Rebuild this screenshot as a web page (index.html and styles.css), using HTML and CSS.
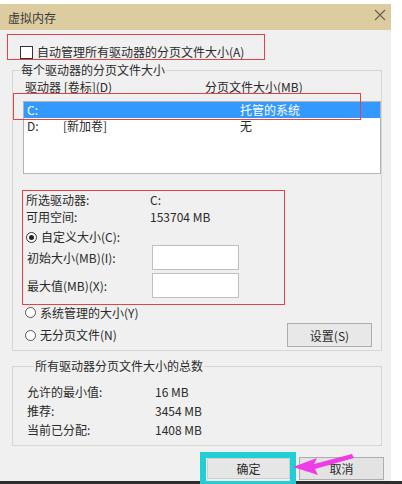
FILE: index.html
```html
<!DOCTYPE html>
<html>
  <head>
    <title>虚拟内存</title>
    <link rel="stylesheet" href="styles.css">
  </head>
  <body>
    <div class="window">
      <div class="titlebar">
        <span class="title">虚拟内存</span>
        <svg class="close" width="12" height="12" viewBox="0 0 12 12">
          <path d="M1 1 L11 11 M11 1 L1 11" stroke="#6b6456" stroke-width="1.2" fill="none"/>
        </svg>
      </div>
      <div class="content">
        <label class="auto-manage">
          <span class="checkbox"></span>自动管理所有驱动器的分页文件大小(A)
        </label>

        <fieldset class="group">
          <legend>每个驱动器的分页文件大小</legend>
          <div class="drives">
            <div class="list-head">
              <span class="head-drive">驱动器 [卷标](D)</span>
              <span>分页文件大小(MB)</span>
            </div>
            <div class="list">
              <div class="item selected">
                <span class="col-letter">C:</span>
                <span class="col-label"></span>
                <span>托管的系统</span>
              </div>
              <div class="item">
                <span class="col-letter">D:</span>
                <span class="col-label">[新加卷]</span>
                <span>无</span>
              </div>
            </div>
            <div class="mark-list"></div>
          </div>

          <div class="selected-drive">
            <div class="info-row"><span class="info-label">所选驱动器:</span><span>C:</span></div>
            <div class="info-row"><span class="info-label">可用空间:</span><span>153704 MB</span></div>
            <label class="radio-row custom"><span class="radio checked"></span>自定义大小(C):</label>
            <div class="size-row"><span class="size-label">初始大小(MB)(I):</span><span class="input"></span></div>
            <div class="size-row second"><span class="size-label">最大值(MB)(X):</span><span class="input"></span></div>
          </div>

          <label class="radio-row system"><span class="radio"></span>系统管理的大小(Y)</label>
          <div class="radio-row none">
            <label class="radio-label"><span class="radio"></span>无分页文件(N)</label>
            <button class="btn set-btn">设置(S)</button>
          </div>
        </fieldset>

        <fieldset class="group totals">
          <legend>所有驱动器分页文件大小的总数</legend>
          <div class="total-row"><span class="total-label">允许的最小值:</span><span>16 MB</span></div>
          <div class="total-row"><span class="total-label">推荐:</span><span>3454 MB</span></div>
          <div class="total-row"><span class="total-label">当前已分配:</span><span>1408 MB</span></div>
        </fieldset>

        <div class="buttons">
          <div class="ok-wrap">
            <button class="btn ok-btn">确定</button>
            <div class="mark-ok"></div>
          </div>
          <button class="btn cancel-btn">取消</button>
          <svg class="arrow" width="70" height="28" viewBox="0 0 70 28">
            <polygon points="3,15 27,6 24,12 62,2 64,6 25,17 28,23" fill="#ee3ce6"/>
          </svg>
        </div>
      </div>
    </div>
    <div class="taskbar"></div>
  </body>
</html>
```

FILE: styles.css
```css
body {
  margin: 0;
  width: 402px;
  height: 484px;
  overflow: hidden;
  background-color: #fff;
  font-family: "Noto Sans CJK SC", "Noto Sans", sans-serif;
  font-size: 12px;
  color: #2a2a2a;
}

.window {
  width: 391px;
  height: 477px;
  margin-top: 4px;
  background-color: #f0f0f0;
}

.titlebar {
  height: 26px;
  display: flex;
  align-items: center;
  justify-content: space-between;
  padding: 0 5px 0 8px;
  background-color: #dccca0;
  color: #3a3a3a;
}

.close {
  margin-top: -4px;
}

.content {
  padding: 0 9px 0 7px;
}

.auto-manage {
  display: flex;
  align-items: center;
  box-sizing: border-box;
  width: 258px;
  height: 26px;
  margin-top: 4px;
  padding: 10px 0 0 12px;
  border: 1px solid #e0434a;
  line-height: 14px;
}

.checkbox {
  width: 11px;
  height: 11px;
  margin-right: 4px;
  border: 1px solid #333;
  background-color: #fff;
}

.group {
  margin: 3px 0 0 5px;
  padding: 0;
  border: 1px solid #d6d6d6;
  min-width: 0;
}

.group legend {
  margin-left: 7px;
  padding: 0 1px;
  line-height: 14px;
}

.drives {
  position: relative;
  padding-top: 3px;
}

.list-head {
  display: flex;
  padding-left: 12px;
  line-height: 14px;
}

.head-drive {
  width: 180px;
}

.list {
  box-sizing: border-box;
  height: 73px;
  margin: 7px 0 0 10px;
  border: 1px solid #b4b4b4;
  background-color: #fff;
}

.item {
  display: flex;
  height: 16px;
  padding-left: 3px;
  line-height: 16px;
}

.item.selected {
  background-color: #3399ff;
  color: #fff;
}

.col-letter {
  width: 36px;
}

.col-label {
  width: 177px;
}

.mark-list {
  position: absolute;
  left: 0;
  top: 16px;
  width: 348px;
  height: 27px;
  box-sizing: border-box;
  border: 1px solid #e0434a;
}

.selected-drive {
  box-sizing: border-box;
  width: 263px;
  margin: 16px 0 0 9px;
  padding: 0 0 6px 3px;
  border: 1px solid #e0434a;
}

.info-row {
  display: flex;
  height: 17px;
  line-height: 17px;
}

.info-label {
  width: 124px;
}

.radio-row {
  display: flex;
  align-items: center;
  line-height: 16px;
}

.radio-row.custom {
  height: 16px;
  margin-top: 4px;
}

.radio-row.system {
  height: 15px;
  margin-left: 12px;
}

.radio-row.none {
  justify-content: space-between;
  height: 24px;
  margin: 3px 9px 3px 12px;
}

.radio-label {
  display: flex;
  align-items: center;
}

.radio {
  box-sizing: border-box;
  width: 11px;
  height: 11px;
  margin-right: 4px;
  border: 1px solid #555;
  border-radius: 50%;
  background-color: #fff;
  display: flex;
  align-items: center;
  justify-content: center;
}

.radio.checked {
  border-color: #333;
}

.radio.checked::after {
  content: "";
  width: 5px;
  height: 5px;
  border-radius: 50%;
  background-color: #222;
}

.size-row {
  display: flex;
  align-items: center;
  height: 25px;
  padding-left: 1px;
}

.size-row.second {
  margin-top: 3px;
}

.size-label {
  width: 125px;
}

.input {
  box-sizing: border-box;
  width: 87px;
  height: 25px;
  border: 1px solid #bfbfbf;
  background-color: #fff;
}

.btn {
  box-sizing: border-box;
  padding: 0;
  border: 1px solid #adadad;
  background-color: #e3e3e3;
  font-family: inherit;
  font-size: 12px;
  color: #2a2a2a;
}

.set-btn {
  width: 85px;
  height: 24px;
  background-color: #e8e8e8;
}

.totals {
  margin-top: 8px;
  padding: 9px 0 6px 14px;
}

.total-row {
  display: flex;
  height: 19px;
  line-height: 19px;
}

.total-label {
  width: 128px;
}

.buttons {
  position: relative;
  display: flex;
  justify-content: flex-end;
  gap: 9px;
  margin: 11px -2px 0 0;
}

.ok-wrap {
  position: relative;
}

.ok-btn {
  width: 83px;
  height: 21px;
  margin-top: 1px;
  border-color: #d0d0d0;
  background-color: #e6e6e6;
}

.cancel-btn {
  width: 85px;
  height: 23px;
}

.mark-ok {
  position: absolute;
  left: -7px;
  top: -5px;
  right: -6px;
  bottom: -7px;
  border: 6px solid #22ced4;
  z-index: 2;
}

.arrow {
  position: absolute;
  left: 283px;
  top: -5px;
  z-index: 3;
}

.taskbar {
  height: 3px;
  background-color: #2e2e2e;
  position: relative;
  z-index: 1;
}
```
